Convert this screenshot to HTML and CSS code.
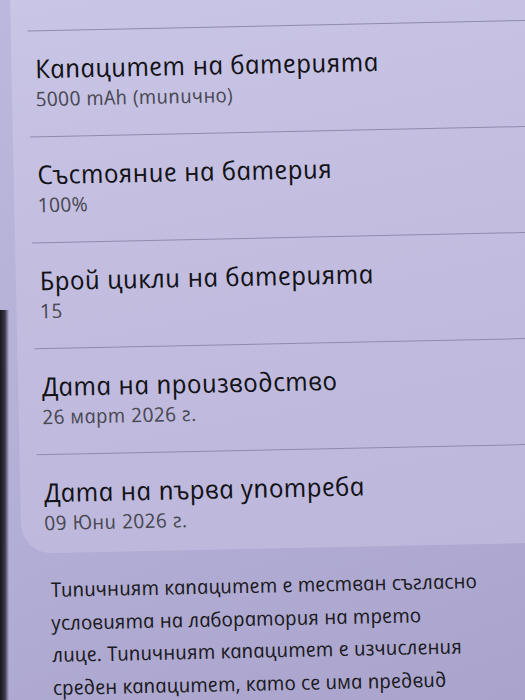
FILE: index.html
```html
<!DOCTYPE html>
<html lang="bg">
<head>
<meta charset="utf-8">
<link rel="stylesheet" href="styles.css">
</head>
<body>
<div class="screen">
  <section class="card">
    <div class="row">
      <div class="title bg">Капацитет на батерията</div>
      <div class="sub bg">5000 mAh (типично)</div>
    </div>
    <div class="row">
      <div class="title bg">Състояние на батерия</div>
      <div class="sub bg">100%</div>
    </div>
    <div class="row">
      <div class="title bg">Брой цикли на батерията</div>
      <div class="sub bg">15</div>
    </div>
    <div class="row">
      <div class="title bg">Дата на производство</div>
      <div class="sub bg">26 март 2026 г.</div>
    </div>
    <div class="row">
      <div class="title bg">Дата на първа употреба</div>
      <div class="sub bg">09 Юни 2026 г.</div>
    </div>
  </section>
  <p class="note">
    <span class="line bg">Типичният капацитет е тестван съгласно</span>
    <span class="line bg">условията на лаборатория на трето</span>
    <span class="line bg">лице. Типичният капацитет е изчисления</span>
    <span class="line bg">среден капацитет, като се има предвид</span>
  </p>
</div>
</body>
</html>
```

FILE: styles.css
```css
html, body {
  margin: 0;
  padding: 0;
}
body {
  width: 525px;
  height: 700px;
  overflow: hidden;
  font-family: "Open Sans", "Noto Sans", sans-serif;
  background:
    linear-gradient(to right, #17161f 0, #3b3949 5px, rgba(59,57,73,0) 9px) 0 310px / 10px 390px no-repeat,
    linear-gradient(160deg, #bcb7dc 0%, #b3aed5 60%, #aaa4cd 100%);
}
/* Bulgarian letterforms: italic glyphs set upright */
.bg {
  font-style: italic;
  transform: skewX(12deg);
}
.screen {
  width: 580px;
  display: flex;
  flex-direction: column;
  transform: rotate(-1.2deg);
  transform-origin: 0 0;
}
.card {
  margin-left: 10px;
  margin-top: -40px;
  padding-top: 71px;
  background: linear-gradient(170deg, #cac6e6 0%, #c3bee0 45%, #bcb7db 100%);
  border-bottom-left-radius: 30px;
}
.row {
  border-top: 1.5px solid #8f8ab0;
  margin-left: 17px;
  padding: 19px 0 24px 6px;
}
.row:last-child {
  padding-bottom: 17px;
}
.title {
  font-size: 26px;
  line-height: 36px;
  color: #131317;
  letter-spacing: 0.3px;
}
.sub {
  font-size: 20px;
  line-height: 26px;
  color: #4a4954;
  letter-spacing: 0.3px;
}
.note {
  margin: 20px 0 0 38px;
  font-size: 20.2px;
  line-height: 32.5px;
  color: #1c1b22;
}
.line {
  display: block;
  white-space: nowrap;
}
```
